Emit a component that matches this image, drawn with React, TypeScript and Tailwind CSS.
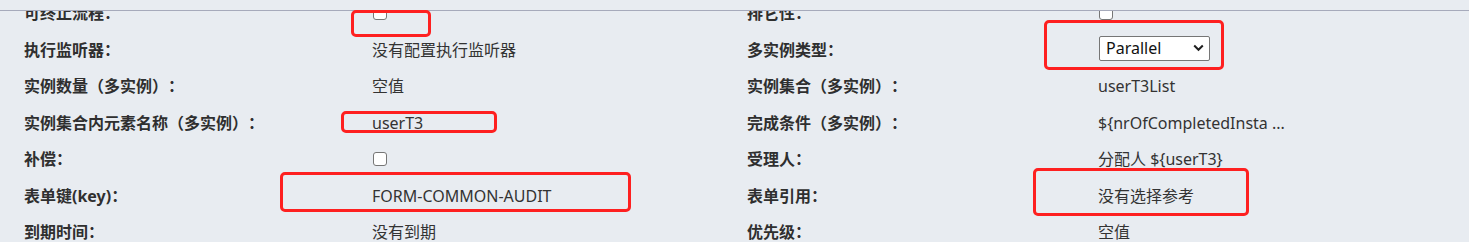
import React from "react";

type Val = { kind: "text"; v: string } | { kind: "check" } | { kind: "select"; v: string };

const rows: [string, Val, string, Val][] = [
  ["可终止流程：", { kind: "check" }, "排它性：", { kind: "check" }],
  ["执行监听器：", { kind: "text", v: "没有配置执行监听器" }, "多实例类型：", { kind: "select", v: "Parallel" }],
  ["实例数量（多实例）：", { kind: "text", v: "空值" }, "实例集合（多实例）：", { kind: "text", v: "userT3List" }],
  ["实例集合内元素名称（多实例）：", { kind: "text", v: "userT3" }, "完成条件（多实例）：", { kind: "text", v: "${nrOfCompletedInsta ..." }],
  ["补偿：", { kind: "check" }, "受理人：", { kind: "text", v: "分配人 ${userT3}" }],
  ["表单键(key)：", { kind: "text", v: "FORM-COMMON-AUDIT" }, "表单引用：", { kind: "text", v: "没有选择参考" }],
  ["到期时间：", { kind: "text", v: "没有到期" }, "优先级：", { kind: "text", v: "空值" }],
];

function Value({ val }: { val: Val }) {
  if (val.kind === "check") {
    return (
      <input
        type="checkbox"
        readOnly
        className="appearance-none w-[14px] h-[14px] border border-[#767676] rounded-[3px] bg-white ml-px"
      />
    );
  }
  if (val.kind === "select") {
    return (
      <div className="relative w-[111px] h-[25px] ml-px -mt-[3px]">
        <select
          defaultValue={val.v}
          className="appearance-none w-full h-full border border-[#767676] rounded-[2px] bg-white pl-[6px] text-[16px] leading-[23px] text-[#111]"
        >
          <option>Parallel</option>
          <option>Sequential</option>
        </select>
        <svg
          className="absolute right-[6px] top-[8px] pointer-events-none"
          width="11"
          height="8"
          viewBox="0 0 11 8"
        >
          <path d="M1.2 1.5 L5.5 5.8 L9.8 1.5" fill="none" stroke="#1f1f1f" strokeWidth="2" />
        </svg>
      </div>
    );
  }
  return <span className="whitespace-nowrap text-[#333]">{val.v}</span>;
}

export default function App() {
  return (
    <div
      className="relative w-[1469px] h-[242px] overflow-hidden bg-[#e8ecf1] text-[16px] [text-spacing-trim:space-all]"
      style={{ fontFamily: '"Noto Sans", "Noto Sans CJK SC", sans-serif' }}
    >
      <div className="relative z-10 h-[11px] bg-[#e8ecf1] border-b border-[#a6aabb]" />
      <div className="h-[231px] overflow-hidden">
        <div className="-mt-[16px] pl-[24px] flex flex-col">
          {rows.map((r, i) => (
            <div key={i} className="h-[36.5px] flex items-center">
              <div className="w-[348px] font-bold text-[#2f2f2f] whitespace-nowrap">{r[0]}</div>
              <div className="w-[375px] flex items-center">
                <Value val={r[1]} />
              </div>
              <div className="w-[351px] font-bold text-[#2f2f2f] whitespace-nowrap">{r[2]}</div>
              <div className="flex-1 flex items-center">
                <Value val={r[3]} />
              </div>
            </div>
          ))}
        </div>
      </div>

      {/* red annotation boxes */}
      <div className="absolute z-20 left-[351px] top-[10px] w-[80px] h-[27px] border-[3px] border-[#fe2020] rounded-[5px]" />
      <div className="absolute z-20 left-[1044px] top-[20px] w-[180px] h-[50px] border-[3px] border-[#fe2020] rounded-[5px]" />
      <div className="absolute z-20 left-[341px] top-[111px] w-[156px] h-[22px] border-[3px] border-[#fe2020] rounded-[5px]" />
      <div className="absolute z-20 left-[280px] top-[172px] w-[351px] h-[40px] border-[3px] border-[#fe2020] rounded-[5px]" />
      <div className="absolute z-20 left-[1033px] top-[168px] w-[216px] h-[48px] border-[3px] border-[#fe2020] rounded-[5px]" />
    </div>
  );
}
